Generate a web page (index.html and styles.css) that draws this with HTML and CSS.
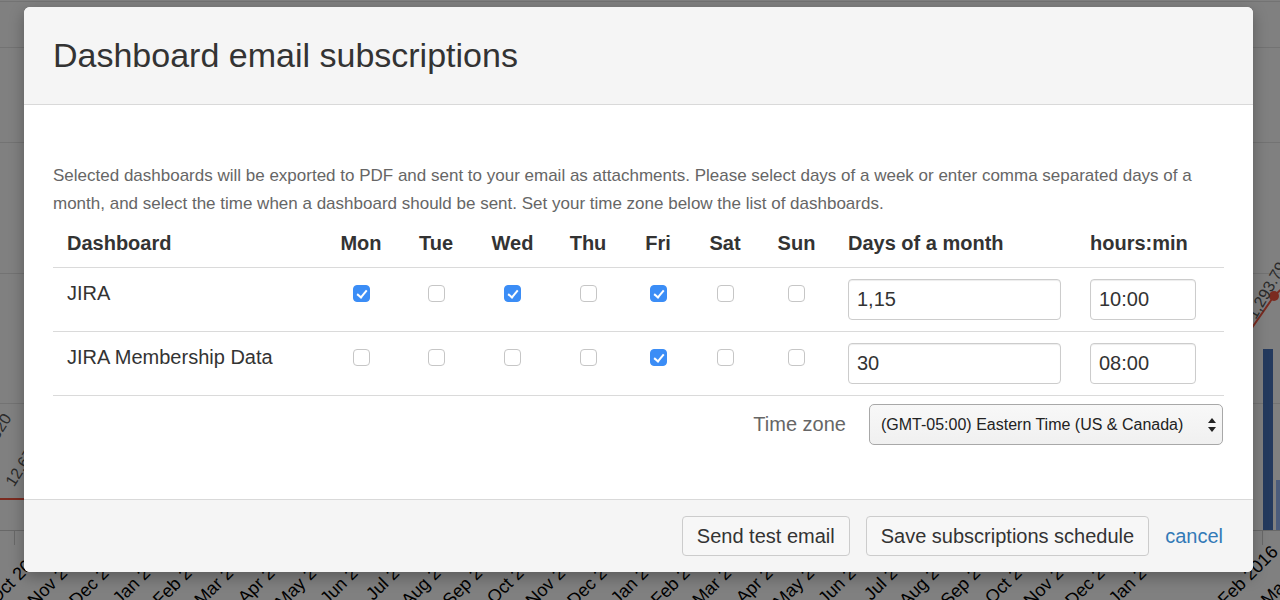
FILE: index.html
```html
<!DOCTYPE html>
<html lang="en">
<head>
<meta charset="utf-8">
<title>Dashboard email subscriptions</title>
<link rel="stylesheet" href="styles.css">
</head>
<body>
<div class="page">
  <svg class="chart" width="1280" height="600" viewBox="0 0 1280 600" aria-hidden="true">
    <rect width="1280" height="600" fill="#808080"/>
    <g stroke="#737373" stroke-width="1">
      <line x1="0" y1="1.5" x2="1280" y2="1.5"/>
      <line x1="0" y1="47.5" x2="1280" y2="47.5"/>
      <line x1="0" y1="142.5" x2="1280" y2="142.5"/>
      <line x1="0" y1="273.5" x2="1280" y2="273.5"/>
      <line x1="0" y1="403.5" x2="1280" y2="403.5"/>
    </g>
    <g stroke="#686868" stroke-width="1">
      <line x1="0" y1="530.5" x2="1280" y2="530.5"/>
      <line x1="14.5" y1="530" x2="14.5" y2="545"/>
      <line x1="1262.5" y1="530" x2="1262.5" y2="545"/>
    </g>
    <rect x="1263" y="349" width="10" height="181" fill="#243a5e"/>
    <rect x="1276" y="480" width="10" height="50" fill="#4b5c7c"/>
    <polyline points="0,499 40,499" fill="none" stroke="#7b2b20" stroke-width="2"/>
    <polyline points="1240,345 1274,296 1295,276" fill="none" stroke="#7b2b20" stroke-width="2"/>
    <circle cx="1274" cy="296" r="5" fill="#7b2b20"/>
    <g class="data-label">
      <text x="12" y="418" transform="rotate(-58 12 418)" text-anchor="end">320</text>
      <text x="40" y="446" transform="rotate(-58 40 446)" text-anchor="end">12,679</text>
      <text x="1287" y="266" transform="rotate(-60 1287 266)" text-anchor="end">1,293.79</text>
    </g>
    <g class="month-label" text-anchor="end">
      <text x="48" y="553" transform="rotate(-45 48 553)">Oct 2013</text>
      <text x="89.5" y="553" transform="rotate(-45 89.5 553)">Nov 2013</text>
      <text x="131" y="553" transform="rotate(-45 131 553)">Dec 2013</text>
      <text x="172.5" y="553" transform="rotate(-45 172.5 553)">Jan 2014</text>
      <text x="214" y="553" transform="rotate(-45 214 553)">Feb 2014</text>
      <text x="255.5" y="553" transform="rotate(-45 255.5 553)">Mar 2014</text>
      <text x="297" y="553" transform="rotate(-45 297 553)">Apr 2014</text>
      <text x="338.5" y="553" transform="rotate(-45 338.5 553)">May 2014</text>
      <text x="380" y="553" transform="rotate(-45 380 553)">Jun 2014</text>
      <text x="421.5" y="553" transform="rotate(-45 421.5 553)">Jul 2014</text>
      <text x="463" y="553" transform="rotate(-45 463 553)">Aug 2014</text>
      <text x="504.5" y="553" transform="rotate(-45 504.5 553)">Sep 2014</text>
      <text x="546" y="553" transform="rotate(-45 546 553)">Oct 2014</text>
      <text x="587.5" y="553" transform="rotate(-45 587.5 553)">Nov 2014</text>
      <text x="629" y="553" transform="rotate(-45 629 553)">Dec 2014</text>
      <text x="670.5" y="553" transform="rotate(-45 670.5 553)">Jan 2015</text>
      <text x="712" y="553" transform="rotate(-45 712 553)">Feb 2015</text>
      <text x="753.5" y="553" transform="rotate(-45 753.5 553)">Mar 2015</text>
      <text x="795" y="553" transform="rotate(-45 795 553)">Apr 2015</text>
      <text x="836.5" y="553" transform="rotate(-45 836.5 553)">May 2015</text>
      <text x="878" y="553" transform="rotate(-45 878 553)">Jun 2015</text>
      <text x="919.5" y="553" transform="rotate(-45 919.5 553)">Jul 2015</text>
      <text x="961" y="553" transform="rotate(-45 961 553)">Aug 2015</text>
      <text x="1002.5" y="553" transform="rotate(-45 1002.5 553)">Sep 2015</text>
      <text x="1044" y="553" transform="rotate(-45 1044 553)">Oct 2015</text>
      <text x="1085.5" y="553" transform="rotate(-45 1085.5 553)">Nov 2015</text>
      <text x="1127" y="553" transform="rotate(-45 1127 553)">Dec 2015</text>
      <text x="1168.5" y="553" transform="rotate(-45 1168.5 553)">Jan 2016</text>
      <text x="1279" y="553" transform="rotate(-45 1279 553)">Feb 2016</text>
      <text x="1322" y="553" transform="rotate(-45 1322 553)">Mar 2016</text>
    </g>
  </svg>

  <div class="modal" role="dialog" aria-labelledby="modal-title">
    <div class="modal-header">
      <h4 class="modal-title" id="modal-title">Dashboard email subscriptions</h4>
    </div>
    <div class="modal-body">
      <p class="intro">Selected dashboards will be exported to PDF and sent to your email as attachments. Please select days of a week or enter comma separated days of a month, and select the time when a dashboard should be sent. Set your time zone below the list of dashboards.</p>
      <table class="subs">
        <colgroup>
          <col class="c-name"><col class="c-mon"><col class="c-tue"><col class="c-wed"><col class="c-thu"><col class="c-fri"><col class="c-sat"><col class="c-sun"><col class="c-days"><col class="c-time">
        </colgroup>
        <thead>
          <tr>
            <th class="name">Dashboard</th>
            <th class="day">Mon</th>
            <th class="day">Tue</th>
            <th class="day">Wed</th>
            <th class="day">Thu</th>
            <th class="day">Fri</th>
            <th class="day">Sat</th>
            <th class="day">Sun</th>
            <th class="field">Days of a month</th>
            <th class="field">hours:min</th>
          </tr>
        </thead>
        <tbody>
          <tr>
            <td class="name">JIRA</td>
            <td class="day"><input type="checkbox" class="check" checked></td>
            <td class="day"><input type="checkbox" class="check"></td>
            <td class="day"><input type="checkbox" class="check" checked></td>
            <td class="day"><input type="checkbox" class="check"></td>
            <td class="day"><input type="checkbox" class="check" checked></td>
            <td class="day"><input type="checkbox" class="check"></td>
            <td class="day"><input type="checkbox" class="check"></td>
            <td class="field"><input type="text" class="text-input days-input" value="1,15"></td>
            <td class="field"><input type="text" class="text-input time-input" value="10:00"></td>
          </tr>
          <tr>
            <td class="name">JIRA Membership Data</td>
            <td class="day"><input type="checkbox" class="check"></td>
            <td class="day"><input type="checkbox" class="check"></td>
            <td class="day"><input type="checkbox" class="check"></td>
            <td class="day"><input type="checkbox" class="check"></td>
            <td class="day"><input type="checkbox" class="check" checked></td>
            <td class="day"><input type="checkbox" class="check"></td>
            <td class="day"><input type="checkbox" class="check"></td>
            <td class="field"><input type="text" class="text-input days-input" value="30"></td>
            <td class="field"><input type="text" class="text-input time-input" value="08:00"></td>
          </tr>
        </tbody>
      </table>
      <div class="tz-row">
        <label class="tz-label" for="tz">Time zone</label>
        <div class="select-wrap">
          <select id="tz" class="tz-select">
            <option>(GMT-05:00) Eastern Time (US &amp; Canada)</option>
          </select>
          <svg class="select-arrows" width="8" height="14" viewBox="0 0 8 14" aria-hidden="true">
            <path d="M4 0 L8 5 L0 5 Z" fill="#222"/>
            <path d="M0 9 L8 9 L4 14 Z" fill="#222"/>
          </svg>
        </div>
      </div>
    </div>
    <div class="modal-footer">
      <button type="button" class="btn">Send test email</button>
      <button type="button" class="btn">Save subscriptions schedule</button>
      <a href="#" class="cancel">cancel</a>
    </div>
  </div>
</div>
</body>
</html>
```

FILE: styles.css
```css
* {
  box-sizing: border-box;
}

html, body {
  margin: 0;
  padding: 0;
}

body {
  width: 1280px;
  height: 600px;
  overflow: hidden;
  background: #808080;
  font-family: "Liberation Sans", Arial, Helvetica, sans-serif;
  color: #333;
}

.page {
  position: relative;
  width: 1280px;
  height: 600px;
}

.chart {
  display: block;
}

.month-label text {
  font-family: "Liberation Sans", Arial, sans-serif;
  font-size: 18px;
  fill: #000;
}

.data-label text {
  font-family: "Liberation Sans", Arial, sans-serif;
  font-size: 16px;
  fill: #2b2b2b;
}

/* modal overlays the chart */
.modal {
  position: absolute;
  left: 24px;
  top: 7px;
  width: 1229px;
  background: #fff;
  border-radius: 6px;
  overflow: hidden;
  box-shadow: 0 5px 15px rgba(0, 0, 0, 0.3);
}

.modal-header {
  background: #f5f5f5;
  padding: 28px 29px 29px;
  border-bottom: 1px solid #d9d9d9;
}

.modal-title {
  margin: 0;
  font-size: 34px;
  line-height: 40px;
  font-weight: normal;
  color: #333;
}

.modal-body {
  padding: 57px 29px 54px;
}

.intro {
  margin: 0;
  font-size: 17px;
  line-height: 28px;
  color: #666;
}

.subs {
  width: 1171px;
  table-layout: fixed;
  border-collapse: collapse;
}

.c-name { width: 271px; }
.c-mon { width: 74px; }
.c-tue { width: 76px; }
.c-wed { width: 77px; }
.c-thu { width: 74px; }
.c-fri { width: 66px; }
.c-sat { width: 68px; }
.c-sun { width: 75px; }
.c-days { width: 242px; }
.c-time { width: 148px; }

.subs th {
  padding: 15px 14px 14px;
  font-size: 20px;
  line-height: 20px;
  font-weight: bold;
  color: #333;
  text-align: left;
  white-space: nowrap;
  border-bottom: 1px solid #dadada;
}

.subs th.day {
  text-align: center;
  padding-left: 0;
  padding-right: 0;
}

.subs td {
  padding: 11px 14px;
  vertical-align: top;
  border-bottom: 1px solid #dadada;
}

.subs td.name {
  padding-top: 14px;
  font-size: 20px;
  line-height: 22px;
  color: #333;
  white-space: nowrap;
}

.subs td.day {
  padding: 17px 0 0;
  text-align: center;
}

.check {
  appearance: none;
  -webkit-appearance: none;
  display: block;
  position: relative;
  width: 17px;
  height: 17px;
  margin: 0 auto;
  border: 1px solid #c6c6c6;
  border-radius: 4px;
  background: #fff;
}

.check:checked {
  background: #3b8df6;
  border-color: #3b8df6;
}

.check:checked::after {
  content: "";
  position: absolute;
  left: 5px;
  top: 2px;
  width: 4px;
  height: 8px;
  border: solid #fff;
  border-width: 0 2px 2px 0;
  transform: rotate(40deg);
}

.text-input {
  display: block;
  height: 41px;
  padding: 0 8px;
  font-family: "Liberation Sans", Arial, sans-serif;
  font-size: 20px;
  color: #333;
  background: #fff;
  border: 1px solid #cccccc;
  border-radius: 4px;
  box-shadow: inset 0 1px 1px rgba(0, 0, 0, 0.075);
  outline: none;
}

.days-input {
  width: 213px;
}

.time-input {
  width: 106px;
}

.tz-row {
  display: flex;
  justify-content: flex-end;
  align-items: center;
  gap: 23px;
  width: 1171px;
  margin-top: 8px;
  padding-right: 1px;
}

.tz-label {
  font-size: 20px;
  color: #666;
}

.select-wrap {
  position: relative;
  width: 354px;
  height: 41px;
}

.tz-select {
  appearance: none;
  -webkit-appearance: none;
  display: block;
  width: 100%;
  height: 41px;
  padding: 0 28px 0 11px;
  font-family: "Liberation Sans", Arial, sans-serif;
  font-size: 16px;
  color: #222;
  background: linear-gradient(#f8f8f8, #f0f0f0);
  border: 1px solid #a8a8a8;
  border-radius: 5px;
  outline: none;
}

.select-arrows {
  position: absolute;
  right: 7px;
  top: 14px;
  pointer-events: none;
}

.modal-footer {
  display: flex;
  justify-content: flex-end;
  align-items: center;
  gap: 16px;
  padding: 16px 30px;
  background: #f5f5f5;
  border-top: 1px solid #d9d9d9;
}

.btn {
  height: 40px;
  padding: 0 14px;
  font-family: "Liberation Sans", Arial, sans-serif;
  font-size: 20px;
  color: #333;
  background: #f7f7f7;
  border: 1px solid #cccccc;
  border-radius: 4px;
}

.cancel {
  font-size: 20px;
  color: #337ab7;
  text-decoration: none;
}
```
